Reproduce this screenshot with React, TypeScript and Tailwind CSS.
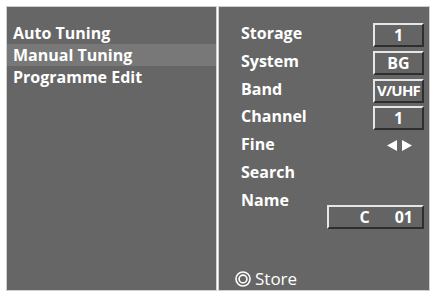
import React from "react";

const font = { fontFamily: '"Open Sans", "Noto Sans", sans-serif' };

function ValueBox({ children, wide }: { children?: React.ReactNode; wide?: boolean }) {
  return (
    <div
      className={`mt-[1px] h-[24px] ${wide ? "w-[97px]" : "w-[51px]"} flex items-center justify-center border-2 border-t-[#e6e6e6] border-l-[#e6e6e6] border-b-[#2e2e2e] border-r-[#2e2e2e] bg-[#646464] text-white font-bold text-[16px] leading-none`}
    >
      {children}
    </div>
  );
}

function Row({ label, children }: { label: string; children?: React.ReactNode }) {
  return (
    <div className="flex items-start justify-between h-[27.8px]">
      <span className="text-white font-bold text-[16px] leading-[22px]">{label}</span>
      {children}
    </div>
  );
}

export default function App() {
  return (
    <div className="w-[435px] h-[296px] bg-white pl-[6px] pt-[6px] flex gap-[1px]" style={font}>
      <div className="w-[211px] h-[285px] bg-[#666666] border border-[#cfcfcf] pt-[15px]">
        <div className="pl-[6px] h-[22px] text-white font-bold text-[16px] leading-[22px]">Auto Tuning</div>
        <div className="pl-[6px] h-[22px] bg-[#787878] text-white font-bold text-[16px] leading-[22px]">Manual Tuning</div>
        <div className="pl-[6px] h-[22px] text-white font-bold text-[16px] leading-[22px]">Programme Edit</div>
      </div>
      <div className="w-[212px] h-[285px] bg-[#666666] border border-[#cfcfcf] pt-[15px] pl-[22px] pr-[5px] flex flex-col">
        <Row label="Storage">
          <ValueBox>1</ValueBox>
        </Row>
        <Row label="System">
          <ValueBox>BG</ValueBox>
        </Row>
        <Row label="Band">
          <ValueBox>
            <span className="text-[15px] tracking-[-0.8px]">V/UHF</span>
          </ValueBox>
        </Row>
        <Row label="Channel">
          <ValueBox>1</ValueBox>
        </Row>
        <Row label="Fine">
          <div className="w-[51px] flex justify-center pt-[7px] pl-[2px]">
            <svg width="26" height="11" viewBox="0 0 26 11">
              <polygon points="0,5.5 10,0 10,11" fill="#ffffff" />
              <polygon points="15,0 25,5.5 15,11" fill="#ffffff" />
            </svg>
          </div>
        </Row>
        <Row label="Search" />
        <div className="h-[16px] text-white font-bold text-[16px] leading-[22px]">Name</div>
        <div className="flex justify-end">
          <div className="h-[24px] w-[97px] flex items-center justify-end pr-[9px] gap-[25px] border-2 border-t-[#e6e6e6] border-l-[#e6e6e6] border-b-[#2e2e2e] border-r-[#2e2e2e] bg-[#646464] text-white font-bold text-[16px] leading-none">
            <span>C</span>
            <span>01</span>
          </div>
        </div>
        <div className="mt-auto h-[22px] flex items-center gap-[4px] -ml-[6px]">
          <svg width="16" height="16" viewBox="0 0 16 16">
            <circle cx="8" cy="8" r="7" fill="none" stroke="#ffffff" strokeWidth="1.6" />
            <circle cx="8" cy="8" r="3.9" fill="none" stroke="#ffffff" strokeWidth="1.6" />
          </svg>
          <span className="text-white text-[17px] leading-[22px]">Store</span>
        </div>
      </div>
    </div>
  );
}
